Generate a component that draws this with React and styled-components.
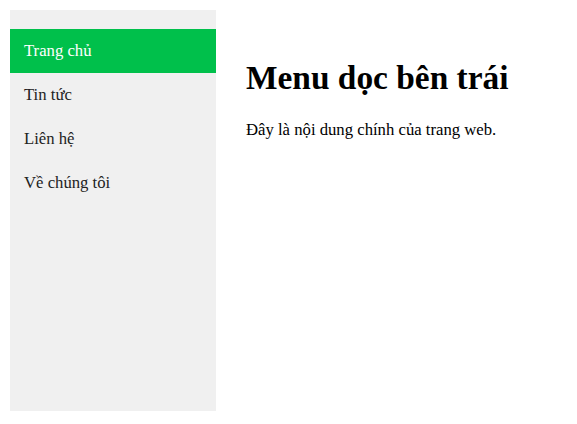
import React from 'react';
import styled, {createGlobalStyle} from 'styled-components';

const GlobalStyle = createGlobalStyle`
  body {
    margin: 0;
    font-family: "Liberation Serif", "Times New Roman", serif;
    font-size: 16.7px;
    background: #fff;
  }
`;

const Layout = styled.div`
  display: flex;
  align-items: flex-start;
  padding: 10px;
`;

const Sidebar = styled.nav`
  box-sizing: border-box;
  flex: 0 0 206px;
  height: 401px;
  padding-top: 19px;
  background: #f0f0f0;
`;

const MenuList = styled.ul`
  list-style: none;
  margin: 0;
  padding: 0;
`;

const MenuLink = styled.a`
  display: block;
  padding: 12px 14px;
  height: 20px;
  line-height: 20px;
  font-size: 16.7px;
  text-decoration: none;
  color: ${props => (props.$active ? '#fff' : '#222')};
  background: ${props => (props.$active ? '#00c04b' : 'transparent')};
`;

const Main = styled.main`
  flex: 1;
  padding: 30px;
  color: #000;

  h1 {
    font-size: 33.4px;
    margin: 19px 0 23px;
  }

  p {
    font-size: 16.7px;
    margin: 16px 0;
  }
`;

const items = ['Trang chủ', 'Tin tức', 'Liên hệ', 'Về chúng tôi'];

const App = () => {
  return (
    <React.Fragment>
      <GlobalStyle />
      <Layout>
        <Sidebar>
          <MenuList>
            {items.map((label, i) => (
              <li key={label}>
                <MenuLink href="#" $active={i === 0}>{label}</MenuLink>
              </li>
            ))}
          </MenuList>
        </Sidebar>
        <Main>
          <h1>Menu dọc bên trái</h1>
          <p>Đây là nội dung chính của trang web.</p>
        </Main>
      </Layout>
    </React.Fragment>
  );
};

export default App;
